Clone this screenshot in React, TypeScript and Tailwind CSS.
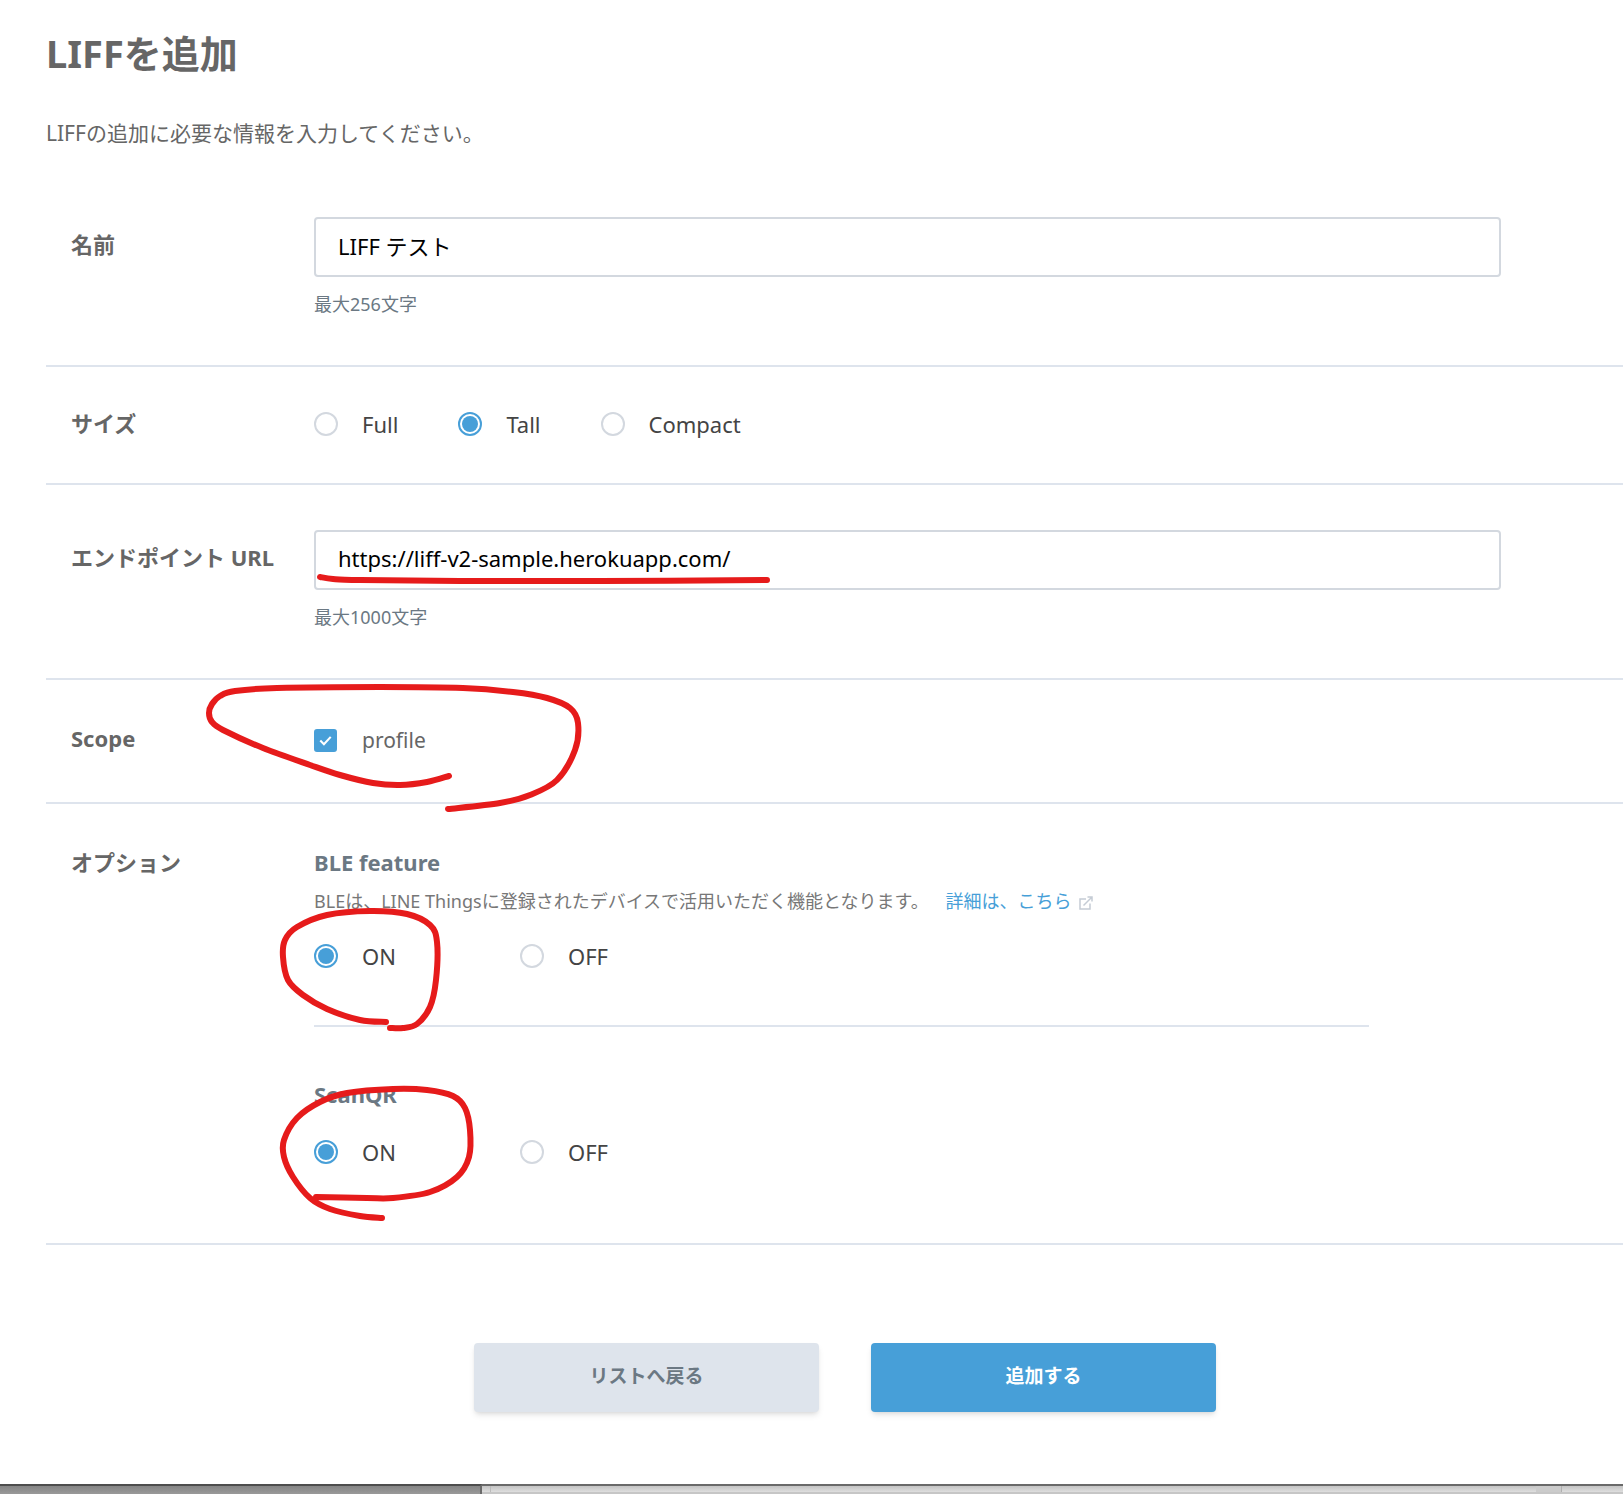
// App.tsx

import { useState } from "react";
import type { ReactNode } from "react";

type Point = [number, number];

const UNDERLINE: Point[] = [[320, 577], [333, 579], [360, 580], [460, 581], [600, 581], [767, 580]];

const SCOPE_LOOP: Point[] = [
  [449, 776], [427, 782], [400, 785], [373, 783], [340, 775], [310, 765], [263, 748], [223, 730],
  [212, 722], [209, 713], [212, 704], [220, 696], [235, 691], [277, 688], [380, 687], [463, 688],
  [513, 692], [547, 698], [570, 708], [578, 723], [575, 750], [557, 780], [530, 795], [500, 803],
  [448, 809],
];

const BLE_LOOP: Point[] = [
  [386, 1022], [360, 1020], [327, 1009], [303, 995], [288, 980], [283, 957], [285, 940], [297, 927],
  [327, 915], [370, 911], [407, 914], [430, 925], [437, 942], [436, 980], [430, 1007], [417, 1024],
  [403, 1028], [390, 1028],
];

const SCAN_LOOP: Point[] = [
  [382, 1218], [360, 1216], [330, 1209], [310, 1198], [293, 1177], [284, 1157], [284, 1140], [297, 1118],
  [320, 1102], [347, 1093], [393, 1089], [427, 1090], [453, 1096], [465, 1108], [470, 1130], [469, 1157],
  [457, 1177], [430, 1192], [393, 1198], [367, 1198], [316, 1197],
];

// smooth curve through all the points
function toPath(points: Point[]) {
  let d = `M${points[0][0]} ${points[0][1]}`;
  for (let i = 0; i < points.length - 1; i++) {
    const a = points[i - 1] ?? points[i];
    const b = points[i];
    const c = points[i + 1];
    const e = points[i + 2] ?? c;
    d += ` C${b[0] + (c[0] - a[0]) / 6} ${b[1] + (c[1] - a[1]) / 6} ${c[0] - (e[0] - b[0]) / 6} ${c[1] - (e[1] - b[1]) / 6} ${c[0]} ${c[1]}`;
  }
  return d;
}

export default function App() {
  const [size, setSize] = useState("Tall");
  const [ble, setBle] = useState("ON");
  const [scan, setScan] = useState("ON");

  return (
    <div className="relative flex min-h-screen flex-col overflow-hidden bg-white font-['Noto_Sans','Noto_Sans_CJK_JP',sans-serif] text-[22px] leading-8 text-[#666]">
      <main className="grow pl-[46px]">
        <h1 className="pt-7 text-[38px] leading-[50px] font-bold">LIFFを追加</h1>
        <p className="pt-[39px] pb-[23px] text-[21px] leading-8">LIFFの追加に必要な情報を入力してください。</p>

        <form onSubmit={(e) => e.preventDefault()}>
          <Row label="名前" htmlFor="name" labelClass="pt-14">
            <TextField id="name" value="LIFF テスト" hint="最大256文字" />
          </Row>

          <Row label="サイズ" labelClass="pt-10">
            <div role="radiogroup" aria-label="サイズ" className="flex gap-[60px] pt-[41px] pb-[43px]">
              {["Full", "Tall", "Compact"].map((s) => (
                <Radio key={s} name="size" label={s} checked={size === s} onChange={() => setSize(s)} />
              ))}
            </div>
          </Row>

          <Row label="エンドポイント URL" htmlFor="endpoint" labelClass="pt-14">
            <TextField id="endpoint" value="https://liff-v2-sample.herokuapp.com/" hint="最大1000文字" />
          </Row>

          <Row label="Scope" labelClass="pt-[42px]">
            <div className="pt-11 pb-[46px]">
              <label className="flex w-fit items-center gap-[25px] text-[21px] leading-8">
                <span className="relative flex">
                  <input type="checkbox" defaultChecked className="peer size-[23px] appearance-none rounded-[3px] border-2 border-[#d3d8df] checked:border-[#479fd8] checked:bg-[#479fd8]" />
                  <svg viewBox="0 0 22 22" className="pointer-events-none absolute inset-0 hidden size-[23px] peer-checked:block" fill="none" stroke="#fff" strokeWidth="2">
                    <path d="M6 11l3.500 3.500L16 7.500" />
                  </svg>
                </span>
                profile
              </label>
            </div>
          </Row>

          <Row label="オプション" labelClass="pt-[42px]">
            <div className="pt-[42px] text-[#6b7883]">
              <h2 className="font-bold">BLE feature</h2>
              <p className="pt-[9px] text-lg leading-7 text-[#777]">
                BLEは、LINE Thingsに登録されたデバイスで活用いただく機能となります。{" "}
                <a href="#ble" className="ml-3 text-[#479fd8]">
                  詳細は、こちら
                  <ExternalIcon />
                </a>
              </p>
              <Switch name="ble" label="BLE feature" value={ble} onChange={setBle} />
              <hr className="mt-[53px] mr-[207px] border-t-2 border-[#dee4ed]" />
              <h2 className="pt-[51px] pb-px font-bold">ScanQR</h2>
              <Switch name="scan" label="ScanQR" value={scan} onChange={setScan} />
              <div className="h-[75px]" />
            </div>
          </Row>

          <div className="flex justify-center gap-[52px] pt-[98px] pb-16 pl-[21px] text-[19px] font-bold">
            <button type="button" className="h-[69px] w-[345px] rounded bg-[#dee4ec] pb-1 text-[#6b7883] shadow-md">
              リストへ戻る
            </button>
            <button type="submit" className="h-[69px] w-[345px] rounded bg-[#479fd8] pb-1 text-white shadow-md">
              追加する
            </button>
          </div>
        </form>
      </main>

      <WindowEdge />

      <svg className="pointer-events-none absolute top-0 left-0" width="1623" height="1494" fill="none" stroke="#e61b1b" strokeWidth="6" strokeLinecap="round" strokeLinejoin="round">
        <path d={toPath(UNDERLINE)} />
        <path d={toPath(SCOPE_LOOP)} />
        <path d={toPath(BLE_LOOP)} />
        <path d={toPath(SCAN_LOOP)} />
      </svg>
    </div>
  );
}

function Row({ label, htmlFor, labelClass, children }: { label: string; htmlFor?: string; labelClass: string; children: ReactNode }) {
  return (
    <div className="flex border-b-2 border-[#dee4ed] pl-[25px]">
      <div className={`w-[243px] shrink-0 font-bold whitespace-nowrap ${labelClass}`}>
        {htmlFor ? <label htmlFor={htmlFor}>{label}</label> : label}
      </div>
      <div className="grow pr-[47px]">{children}</div>
    </div>
  );
}

function TextField({ id, value, hint }: { id: string; value: string; hint: string }) {
  return (
    <div className="pt-[45px] pr-[75px] pb-[46px]">
      <input
        id={id}
        type="text"
        defaultValue={value}
        className="block h-[60px] w-full rounded border-2 border-[#d3d8df] px-[22px] pb-1 text-black outline-none"
      />
      <p className="pt-[13px] pb-px text-lg leading-7 text-[#6b7883]">{hint}</p>
    </div>
  );
}

function Radio({ name, label, checked, onChange }: { name: string; label: string; checked: boolean; onChange: () => void }) {
  return (
    <label className="flex items-center gap-6 text-[#444]">
      <input
        type="radio"
        name={name}
        checked={checked}
        onChange={onChange}
        className="size-6 shrink-0 appearance-none rounded-full border-2 border-[#d3d8df] bg-clip-content p-0.5 checked:border-[#479fd8] checked:bg-[#479fd8]"
      />
      {label}
    </label>
  );
}

function Switch({ name, label, value, onChange }: { name: string; label: string; value: string; onChange: (v: string) => void }) {
  return (
    <div role="radiogroup" aria-label={label} className="flex pt-[25px]">
      {["ON", "OFF"].map((v) => (
        <div key={v} className="w-[206px]">
          <Radio name={name} label={v} checked={value === v} onChange={() => onChange(v)} />
        </div>
      ))}
    </div>
  );
}

function ExternalIcon() {
  return (
    <svg viewBox="0 0 14 14" className="ml-2 inline-block size-[14px]" fill="none" stroke="#c5ccd5" strokeWidth="1.500">
      <path d="M7 3H1v10h10V7.500M4.500 9.500L12.500 1.500M8.500 1H13v4.500" />
    </svg>
  );
}

// top edge of the window that lies below the page
function WindowEdge() {
  return (
    <div className="flex h-[10px] shrink-0">
      <div className="w-[482px] border-t-2 border-r-2 border-t-[#4d4d4d] border-r-[#6b6b6b] bg-linear-to-b from-[#858585] to-[#999]" />
      <div className="flex grow border-t-2 border-b-2 border-t-[#696969] border-b-[#c6c6c6] bg-linear-to-b from-[#c4c4c4] to-[#dedede]">
        <div className="w-[9px] border-r border-[#bbb]" />
        <div className="grow" />
        <div className="mr-[61px] w-[26px] border-r border-[#b0b0b0] bg-[#cbcbcb]" />
      </div>
    </div>
  );
}
